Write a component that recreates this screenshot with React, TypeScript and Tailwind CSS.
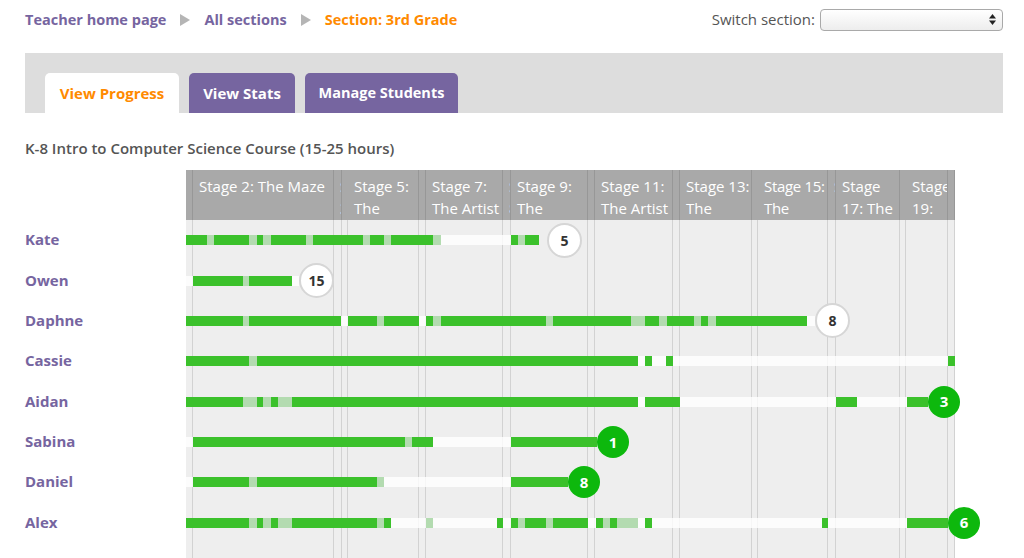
import React from 'react';

type SegType = 'g' | 'l' | 'w' | 'n';
type Seg = [number, SegType];

interface Student {
    name: string;
    segs: Seg[];
    bubble?: { n: number; done: boolean };
}

// chart starts at x=186 on the page, segment ends are page x values
const CHART_LEFT = 186;

const columns: { cls: string; title?: string }[] = [
    { cls: 'w-[7px]', title: 'Stage 1: Graph Paper Programming' },
    { cls: 'w-[141px]', title: 'Stage 2: The Maze' },
    { cls: 'w-[8px]', title: 'Stage 3: Real-Life Algorithms' },
    { cls: 'w-[6px]', title: 'Stage 4: Computational Thinking' },
    { cls: 'w-[71px]', title: 'Stage 5: The Artist' },
    { cls: 'w-[7px]', title: 'Stage 6: Functions Unplugged' },
    { cls: 'w-[77px]', title: 'Stage 7: The Artist 2' },
    { cls: 'w-[8px]', title: 'Stage 8: Getting Loopy' },
    { cls: 'w-[77px]', title: 'Stage 9: The Farmer' },
    { cls: 'w-[7px]', title: 'Stage 10: Conditionals' },
    { cls: 'w-[78px]', title: 'Stage 11: The Artist 3' },
    { cls: 'w-[7px]', title: 'Stage 12: Binary' },
    { cls: 'w-[72px]', title: 'Stage 13: The Farmer' },
    { cls: 'w-[6px]', title: 'Stage 14: Internet' },
    { cls: 'w-[70px] tracking-[-0.3px]', title: 'Stage\u00a015: The Artist 4' },
    { cls: 'w-[8px]', title: 'Stage 16: Crowdsourcing' },
    { cls: 'w-[64px]', title: 'Stage 17: The Bee' },
    { cls: 'w-[6px]', title: 'Stage 18: Digital Citizenship' },
    { cls: 'w-[42px]', title: 'Stage 19: The Artist 5' },
    { cls: 'w-[7px]', title: 'Stage 20: Final Project' },
];

const students: Student[] = [
    {
        name: 'Kate',
        segs: [[207, 'g'], [214, 'l'], [249, 'g'], [257, 'l'], [263, 'g'], [271, 'l'], [306, 'g'], [313, 'l'], [363, 'g'], [370, 'l'], [384, 'g'], [391, 'l'], [433, 'g'], [441, 'l'], [511, 'w'], [518, 'g'], [525, 'l'], [539, 'g'], [547, 'n']],
        bubble: { n: 5, done: false },
    },
    {
        name: 'Owen',
        segs: [[193, 'w'], [243, 'g'], [249, 'l'], [292, 'g'], [299, 'w']],
        bubble: { n: 15, done: false },
    },
    {
        name: 'Daphne',
        segs: [[243, 'g'], [249, 'l'], [341, 'g'], [348, 'w'], [377, 'g'], [384, 'l'], [419, 'g'], [426, 'w'], [433, 'g'], [441, 'l'], [546, 'g'], [553, 'l'], [631, 'g'], [645, 'l'], [659, 'g'], [667, 'l'], [694, 'g'], [701, 'l'], [708, 'g'], [716, 'l'], [807, 'g'], [815, 'w']],
        bubble: { n: 8, done: false },
    },
    {
        name: 'Cassie',
        segs: [[249, 'g'], [257, 'l'], [638, 'g'], [645, 'w'], [652, 'g'], [666, 'w'], [673, 'g'], [948, 'w'], [955, 'g']],
    },
    {
        name: 'Aidan',
        segs: [[243, 'g'], [257, 'l'], [263, 'g'], [271, 'l'], [278, 'g'], [292, 'l'], [638, 'g'], [645, 'w'], [680, 'g'], [836, 'w'], [857, 'g'], [907, 'w'], [928, 'g']],
        bubble: { n: 3, done: true },
    },
    {
        name: 'Sabina',
        segs: [[193, 'w'], [405, 'g'], [412, 'l'], [433, 'g'], [511, 'w'], [597, 'g']],
        bubble: { n: 1, done: true },
    },
    {
        name: 'Daniel',
        segs: [[193, 'w'], [249, 'g'], [257, 'l'], [377, 'g'], [384, 'l'], [511, 'w'], [568, 'g']],
        bubble: { n: 8, done: true },
    },
    {
        name: 'Alex',
        segs: [[249, 'g'], [257, 'l'], [263, 'g'], [271, 'l'], [278, 'g'], [292, 'l'], [377, 'g'], [384, 'l'], [391, 'g'], [426, 'w'], [433, 'l'], [497, 'w'], [503, 'g'], [511, 'w'], [518, 'g'], [525, 'l'], [546, 'g'], [553, 'l'], [588, 'g'], [596, 'w'], [603, 'g'], [610, 'l'], [617, 'g'], [638, 'l'], [645, 'w'], [652, 'g'], [822, 'w'], [828, 'g'], [907, 'w'], [948, 'g']],
        bubble: { n: 6, done: true },
    },
];

const segClass: Record<SegType, string> = {
    g: 'bg-[#3bc12b]',
    l: 'bg-[#b3dbb0]',
    w: 'bg-white/80',
    n: 'bg-transparent',
};

const Arrow = () => (
    <svg width="10" height="12" viewBox="0 0 10 12" className="shrink-0">
        <polygon points="0,0 10,6 0,12" fill="#b5b5b5" />
    </svg>
);

const Bubble: React.FC<{ n: number; done: boolean }> = ({ n, done }) =>
    done ? (
        <div className="flex h-[32px] w-[32px] shrink-0 items-center justify-center rounded-full bg-[#0db80d] text-[15px] font-bold text-white">
            {n}
        </div>
    ) : (
        <div className="flex h-[35px] w-[35px] shrink-0 items-center justify-center rounded-full border-2 border-[#d6d6d6] bg-white text-[14px] font-bold text-[#333]">
            {n}
        </div>
    );

const ProgressRow: React.FC<{ student: Student }> = ({ student }) => (
    <div className="flex h-[40.35px] items-center">
        {student.segs.map(([end, type], i) => {
            const start = i === 0 ? CHART_LEFT : student.segs[i - 1][0];
            return <div key={i} className={`h-[10px] shrink-0 ${segClass[type]}`} style={{ width: end - start }} />;
        })}
        {student.bubble && <Bubble n={student.bubble.n} done={student.bubble.done} />}
    </div>
);

export default function App() {
    return (
        <div className="min-h-[558px] w-[1024px] bg-white pl-[25px] pr-[21px] font-['Open_Sans',sans-serif]">
            {/* Breadcrumb + section switcher */}
            <div className="flex h-[39px] items-center justify-between">
                <div className="flex items-center gap-[14px] text-[14.5px] font-bold">
                    <span className="text-[#7665a0]">Teacher home page</span>
                    <Arrow />
                    <span className="text-[#7665a0]">All sections</span>
                    <Arrow />
                    <span className="text-[#ff8a00]">Section: 3rd Grade</span>
                </div>
                <div className="flex items-center gap-[5px]">
                    <span className="text-[15px] text-[#555]">Switch section:</span>
                    <div className="flex h-[22px] w-[183px] items-center justify-end rounded-[4px] border border-[#a9a9a9] bg-gradient-to-b from-white to-[#ededed] pr-[6px]">
                        <svg width="7" height="11" viewBox="0 0 7 11">
                            <polygon points="3.5,0 7,4.5 0,4.5" fill="#222" />
                            <polygon points="0,6.5 7,6.5 3.5,11" fill="#222" />
                        </svg>
                    </div>
                </div>
            </div>

            {/* Tabs */}
            <div className="mt-[14px] flex h-[60px] items-end gap-[10px] bg-[#dddddd] pl-[20px]">
                <div className="flex h-[40px] w-[134px] items-center justify-center rounded-t-[5px] bg-white text-[15px] font-bold text-[#ff8a00]">
                    View Progress
                </div>
                <div className="flex h-[40px] w-[106px] items-center justify-center rounded-t-[5px] bg-[#7665a0] text-[15px] font-bold text-white">
                    View Stats
                </div>
                <div className="flex h-[40px] w-[153px] items-center justify-center rounded-t-[5px] bg-[#7665a0] text-[14.5px] font-bold text-white">
                    Manage Students
                </div>
            </div>

            <h2 className="mt-[25px] text-[15px] leading-[20px] font-semibold text-[#555]">
                K-8 Intro to Computer Science Course (15-25 hours)
            </h2>

            {/* Progress table */}
            <div className="mt-[12px] flex">
                <div className="w-[161px] shrink-0">
                    <div className="h-[50px]" />
                    {students.map(s => (
                        <div key={s.name} className="flex h-[40.35px] items-center pb-[1px] text-[15px] font-bold text-[#7665a0]">
                            {s.name}
                        </div>
                    ))}
                </div>

                <div className="grid">
                    <div className="col-start-1 row-start-1 flex">
                        {columns.map((c, i) => (
                            <div key={i} className={`flex shrink-0 flex-col ${c.cls}`}>
                                <div className="h-[50px] overflow-hidden border-r border-[#979797] bg-[#a9a9a9] pt-[5px] pl-[6px] text-[15px] leading-[22px] text-white">
                                    {c.title}
                                </div>
                                <div className="h-[340px] border-r border-[#d2d2d2] bg-[#eeeeee]" />
                            </div>
                        ))}
                    </div>
                    <div className="col-start-1 row-start-1 pt-[50px]">
                        {students.map(s => (
                            <ProgressRow key={s.name} student={s} />
                        ))}
                    </div>
                </div>
            </div>
        </div>
    );
}
